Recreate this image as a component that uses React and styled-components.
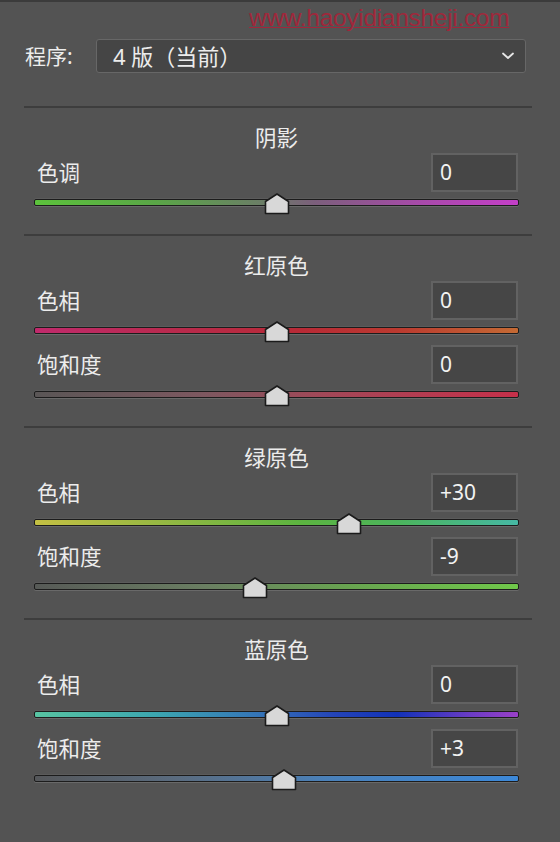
import React from "react";
import styled, { createGlobalStyle } from "styled-components";

const Global = createGlobalStyle`
  html, body { margin: 0; padding: 0; background: #535353; }
  * { box-sizing: border-box; }
`;

const FONT = `"Noto Sans", "Noto Sans CJK SC", sans-serif`;

const Panel = styled.div`
  position: relative;
  width: 560px;
  height: 842px;
  background: #535353;
  border-top: 2px solid #3b3b3b;
  font-family: ${FONT};
  color: #ececec;
  overflow: hidden;
`;

const Watermark = styled.div`
  position: absolute;
  top: 2px;
  left: 249px;
  font-family: "Liberation Sans", Arial, sans-serif;
  font-size: 24.5px;
  letter-spacing: -0.3px;
  color: rgba(190, 22, 50, 0.72);
  text-decoration: underline;
  text-decoration-thickness: 1px;
  text-underline-offset: 1px;
`;

const ProgramRow = styled.div`
  display: flex;
  align-items: flex-start;
  gap: 18px;
  padding: 37px 34px 0 25px;
  height: 104px;
`;

const ProgramLabel = styled.div`
  font-size: 21px;
  line-height: 34px;
  width: 53px;
  white-space: nowrap;
`;

const Select = styled.div`
  flex: 1;
  height: 34px;
  display: flex;
  align-items: center;
  justify-content: space-between;
  padding: 0 10px 0 16px;
  background: #454545;
  border: 1px solid #676767;
  border-radius: 3px;
  font-size: 22px;
`;

const SelectText = styled.span`
  line-height: 32px;
`;

const Divider = styled.div`
  height: 2px;
  margin: 0 28px 0 24px;
  background: #3d3d3d;
`;

const Section = styled.div`
  padding: 18px 41px 17px 34px;
  display: flex;
  flex-direction: column;
`;

const Title = styled.div`
  height: 24px;
  line-height: 24px;
  text-align: center;
  font-size: 21.5px;
  margin-bottom: 3px;
`;

const SliderBlock = styled.div`
  display: flex;
  flex-direction: column;
  height: 64px;
`;

const ValueRow = styled.div`
  display: flex;
  justify-content: space-between;
  align-items: center;
  height: 39px;
  padding-left: 3px;
  padding-right: 1px;
`;

const Label = styled.div`
  font-size: 21.5px;
  line-height: 26px;
`;

const ValueBox = styled.div`
  width: 87px;
  height: 39px;
  background: #464646;
  border: 2px solid #626262;
  padding-left: 7px;
  font-size: 21px;
  line-height: 34px;
  color: #f2f2f2;
`;

const TrackArea = styled.div`
  position: relative;
  height: 22px;
  margin-top: 1px;
`;

const Track = styled.div`
  position: absolute;
  left: 0;
  right: 0;
  top: 6px;
  height: 7px;
  border: 1px solid #1c1c1c;
  border-radius: 2px;
  background: ${(p) => p.$grad};
  box-shadow: 0 1px 0 rgba(255, 255, 255, 0.13), 0 -1px 0 rgba(255,255,255,0.05);
`;

const Thumb = styled.svg`
  position: absolute;
  top: 0;
  width: 26px;
  height: 22px;
  margin-left: -13px;
  overflow: visible;
`;

const Chevron = () => (
  <svg width="14" height="10" viewBox="0 0 14 10">
    <path d="M2 2.5 L7 7 L12 2.5" fill="none" stroke="#e6e6e6" strokeWidth="1.8" strokeLinecap="round" strokeLinejoin="round" />
  </svg>
);

const Slider = ({ label, value, grad, pos }) => (
  <SliderBlock>
    <ValueRow>
      <Label>{label}</Label>
      <ValueBox>{value}</ValueBox>
    </ValueRow>
    <TrackArea>
      <Track $grad={grad} />
      <Thumb viewBox="0 0 26 22" style={{ left: `${pos}%` }}>
        <polygon points="13,1 24.5,8.5 24.5,20.5 1.5,20.5 1.5,8.5" fill="#d8d8d8" stroke="#1b1b1b" strokeWidth="1.6" strokeLinejoin="round" />
      </Thumb>
    </TrackArea>
  </SliderBlock>
);

const pct = (v) => 50 + v / 2;

const sections = [
  {
    title: "阴影",
    sliders: [
      {
        label: "色调",
        value: "0",
        v: 0,
        grad: "linear-gradient(90deg, #5cc23c 0%, #5aa647 25%, #6c7c68 48%, #7c5f7c 58%, #a84aaa 80%, #c43fc8 100%)",
      },
    ],
  },
  {
    title: "红原色",
    sliders: [
      {
        label: "色相",
        value: "0",
        v: 0,
        grad: "linear-gradient(90deg, #c02a6c 0%, #b82a4c 30%, #b82a36 55%, #bb3a30 75%, #c46a34 100%)",
      },
      {
        label: "饱和度",
        value: "0",
        v: 0,
        grad: "linear-gradient(90deg, #5a5656 0%, #7d5860 35%, #a24858 60%, #c6304a 100%)",
      },
    ],
  },
  {
    title: "绿原色",
    sliders: [
      {
        label: "色相",
        value: "+30",
        v: 30,
        grad: "linear-gradient(90deg, #c4c043 0%, #98b843 25%, #5cb440 55%, #4cb45c 75%, #46b8a4 100%)",
      },
      {
        label: "饱和度",
        value: "-9",
        v: -9,
        grad: "linear-gradient(90deg, #575a57 0%, #6a7e62 35%, #68a450 65%, #70c84a 100%)",
      },
    ],
  },
  {
    title: "蓝原色",
    sliders: [
      {
        label: "色相",
        value: "0",
        v: 0,
        grad: "linear-gradient(90deg, #58c4a2 0%, #3ca6b0 25%, #3470b8 48%, #2444b8 62%, #1232b8 75%, #6a3cc4 90%, #9a40c8 100%)",
      },
      {
        label: "饱和度",
        value: "+3",
        v: 3,
        grad: "linear-gradient(90deg, #55575a 0%, #5a6c80 30%, #4a80b8 60%, #3c88d8 100%)",
      },
    ],
  },
];

export default function App() {
  return (
    <>
      <Global />
      <Panel>
        <Watermark>www.haoyidiansheji.com</Watermark>
        <ProgramRow>
          <ProgramLabel>程序:</ProgramLabel>
          <Select>
            <SelectText>4 版（当前）</SelectText>
            <Chevron />
          </Select>
        </ProgramRow>
        {sections.map((s) => (
          <React.Fragment key={s.title}>
            <Divider />
            <Section>
              <Title>{s.title}</Title>
              {s.sliders.map((sl, i) => (
                <Slider key={i} label={sl.label} value={sl.value} grad={sl.grad} pos={pct(sl.v)} />
              ))}
            </Section>
          </React.Fragment>
        ))}
      </Panel>
    </>
  );
}
